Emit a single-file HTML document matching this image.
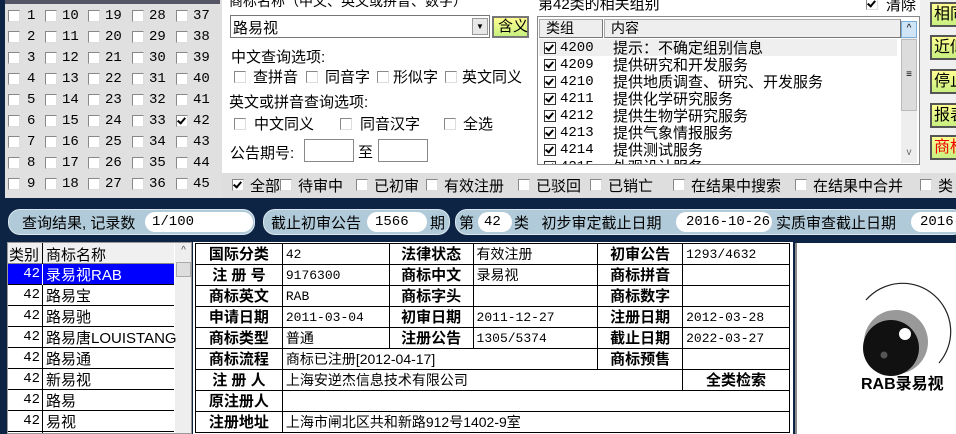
<!DOCTYPE html>
<html><head><meta charset="utf-8"><style>
*{margin:0;padding:0;box-sizing:border-box}
body{width:956px;height:434px;overflow:hidden;background:#0d2444;font-family:"Liberation Sans","Noto Sans CJK SC",sans-serif;font-size:14px;color:#000;position:relative}
.a{position:absolute;white-space:nowrap}
.cb{position:absolute;width:12px;height:12px;background:#fff;border:1px solid #888;border-right-color:#ddd;border-bottom-color:#ddd}
.cb.k::after{content:"";position:absolute;left:2px;top:0px;width:3px;height:6px;border:solid #000;border-width:0 2px 2px 0;transform:rotate(40deg)}
.num{position:absolute;font-family:"Liberation Mono","Noto Sans CJK SC",monospace;font-size:14px;line-height:14px}
.pill{position:absolute;background:#b0cad9;border-radius:12px;height:26px;top:209px;border:1px solid #dbe7ee}
.pin{position:absolute;background:#fff;border-radius:10px;height:20px;top:2px;font-family:"Liberation Mono",monospace;font-size:14px;line-height:20px}
.btn{position:absolute;left:930px;width:34px;height:25px;border:2px solid #555;background:linear-gradient(#ffff90,#c8f080);font-size:16px;line-height:21px;padding-left:2px;overflow:hidden;white-space:nowrap}
table{border-collapse:collapse;position:absolute}
td{border:1px solid #000;height:21px;padding:0 3px;font-size:14px;line-height:19px;white-space:nowrap;overflow:hidden}
td.h{font-weight:bold;text-align:center;font-size:15px;letter-spacing:0px}
td.v{font-family:"Liberation Mono","Noto Sans CJK SC",monospace;font-size:13px}
.m{font-size:15px}
</style></head><body>
<div class="a" style="left:5px;top:0;width:217px;height:198px;background:#e0e0e0"></div>
<div class="a" style="left:222px;top:0;width:734px;height:173px;background:#fff"></div>
<div class="a" style="left:222px;top:173px;width:734px;height:25px;background:#dedede"></div>
<div class="a" style="left:5px;top:0;width:215px;height:4px;background:#556"></div>

<div id="grid"></div>

<div class="a" style="left:229px;top:-9px">商标名称（中文、英文或拼音、数字）</div>
<div class="a" style="left:230px;top:15px;width:260px;height:23px;border:1px solid #777;background:#fff"><span class="a" style="left:2px;top:1px;font-size:15px">路易视</span><span class="a" style="right:1px;top:2px;width:16px;height:17px;background:#e8e8e8;border:1px solid #999;font-size:8px;text-align:center;line-height:16px">▼</span></div>
<div class="a" style="left:492px;top:16px;width:37px;height:22px;border:2px solid #777;background:linear-gradient(#ffff90,#c8f080);font-size:15px;line-height:18px;padding-left:4px">含义</div>
<div class="a" style="left:231px;top:46px;font-size:15px">中文查询选项:</div>
<div class="cb" style="left:234px;top:71px"></div><div class="a m" style="left:253px;top:66px">查拼音</div>
<div class="cb" style="left:306px;top:71px"></div><div class="a m" style="left:325px;top:66px">同音字</div>
<div class="cb" style="left:377px;top:71px"></div><div class="a m" style="left:393px;top:66px">形似字</div>
<div class="cb" style="left:445px;top:71px"></div><div class="a m" style="left:462px;top:66px">英文同义</div>
<div class="a" style="left:229px;top:91px;font-size:15px">英文或拼音查询选项:</div>
<div class="cb" style="left:234px;top:118px"></div><div class="a m" style="left:254px;top:113px">中文同义</div>
<div class="cb" style="left:340px;top:118px"></div><div class="a m" style="left:360px;top:113px">同音汉字</div>
<div class="cb" style="left:444px;top:118px"></div><div class="a m" style="left:463px;top:113px">全选</div>
<div class="a" style="left:230px;top:142px;font-size:15px">公告期号:</div>
<div class="a" style="left:304px;top:139px;width:50px;height:23px;border:1px solid #888;background:#fff"></div>
<div class="a m" style="left:358px;top:141px">至</div>
<div class="a" style="left:378px;top:139px;width:50px;height:23px;border:1px solid #888;background:#fff"></div>

<div class="a" style="left:538px;top:-7px;font-size:15px">第42类的相关组别</div>
<div class="cb k" style="left:866px;top:-2px"></div><div class="a" style="left:886px;top:-6px;font-size:15px">清除</div>
<div class="a" style="left:537px;top:16px;width:383px;height:149px;border:1px solid #888;background:#fff;overflow:hidden">
 <div class="a" style="left:1px;top:2px;width:64px;height:19px;background:#eee;border:1px solid #aaa;border-right-color:#777;border-bottom-color:#777;padding-left:6px;line-height:17px">类组</div>
 <div class="a" style="left:66px;top:2px;width:297px;height:19px;background:#eee;border:1px solid #aaa;border-right-color:#777;border-bottom-color:#777;padding-left:6px;line-height:17px">内容</div>
 <div class="a" style="left:1px;top:22px;width:358px;height:17px;background:#efefef"></div>
 <div class="a" style="left:363px;top:4px;width:16px;height:142px;background:#eee"></div>
 <div class="a" style="left:363px;top:4px;width:16px;height:17px;background:#cfe4f5;border:1px solid #7aaed8;font-size:10px;text-align:center;line-height:14px">^</div>
 <div class="a" style="left:363px;top:22px;width:16px;height:72px;background:#dcdcdc;border:1px solid #bbb;text-align:center;line-height:70px;font-size:10px">≡</div>
 <div class="a" style="left:363px;top:130px;width:16px;height:14px;text-align:center;font-size:10px;color:#666">v</div>
 <div id="grp"></div>
</div>

<div class="a" style="left:920px;top:0;width:36px;height:173px;background:#f0f0f0"></div>
<div class="btn" style="top:2px">相同</div>
<div class="btn" style="top:35px">近似</div>
<div class="btn" style="top:69px">停止</div>
<div class="btn" style="top:103px">报表</div>
<div class="btn" style="top:135px;color:#e00">商标</div>

<div id="strip"></div>

<div class="pill" style="left:8px;width:247px"><span class="a" style="left:13px;top:2px;font-size:15px">查询结果, 记录数</span><div class="pin" style="left:136px;width:108px;padding-left:7px">1/100</div></div>
<div class="pill" style="left:263px;width:187px"><span class="a" style="left:7px;top:2px;font-size:15px">截止初审公告</span><div class="pin" style="left:103px;width:60px;padding-left:8px">1566</div><span class="a" style="left:166px;top:2px;font-size:15px">期</span></div>
<div class="pill" style="left:455px;width:510px"><span class="a" style="left:3px;top:2px;font-size:15px">第</span><div class="pin" style="left:22px;width:34px;padding-left:6px">42</div><span class="a" style="left:58px;top:2px;font-size:15px">类&nbsp;&nbsp;&nbsp;初步审定截止日期</span><div class="pin" style="left:220px;width:96px;padding-left:10px">2016-10-26</div><span class="a" style="left:320px;top:2px;font-size:15px">实质审查截止日期</span><div class="pin" style="left:455px;width:80px;padding-left:9px">2016-</div></div>

<div class="a" style="left:7px;top:242px;width:185px;height:192px;background:#fff;border:1px solid #999;overflow:hidden">
 <div class="a" style="left:0;top:0;width:166px;height:21px;background:#f0f0f0;border-bottom:1px solid #888"></div>
 <div class="a" style="left:1px;top:1px;font-size:15px">类别</div><div class="a" style="left:34px;top:0;width:1px;height:192px;background:#000"></div>
 <div class="a" style="left:38px;top:1px;font-size:15px">商标名称</div>
 <div class="a" style="left:167px;top:0;width:17px;height:192px;background:#eee"></div>
 <div class="a" style="left:167px;top:2px;width:17px;height:14px;font-size:10px;text-align:center;color:#555">^</div>
 <div class="a" style="left:168px;top:19px;width:15px;height:15px;background:#ddd;border:1px solid #aaa"></div>
 <div id="lst"></div>
</div>

<div class="a" style="left:193px;top:242px;width:600px;height:192px;background:#fff"></div>
<table style="left:195px;top:243px;width:595px">
<colgroup><col style="width:87px"><col style="width:107px"><col style="width:84px"><col style="width:125px"><col style="width:85px"><col style="width:107px"></colgroup>
<tr><td class="h">国际分类</td><td class="v">42</td><td class="h">法律状态</td><td>有效注册</td><td class="h">初审公告</td><td class="v">1293/4632</td></tr>
<tr><td class="h">注 册 号</td><td class="v">9176300</td><td class="h">商标中文</td><td>录易视</td><td class="h">商标拼音</td><td></td></tr>
<tr><td class="h">商标英文</td><td class="v">RAB</td><td class="h">商标字头</td><td></td><td class="h">商标数字</td><td></td></tr>
<tr><td class="h">申请日期</td><td class="v">2011-03-04</td><td class="h">初审日期</td><td class="v">2011-12-27</td><td class="h">注册日期</td><td class="v">2012-03-28</td></tr>
<tr><td class="h">商标类型</td><td>普通</td><td class="h">注册公告</td><td class="v">1305/5374</td><td class="h">截止日期</td><td class="v">2022-03-27</td></tr>
<tr><td class="h">商标流程</td><td colspan="3">商标已注册[2012-04-17]</td><td class="h">商标预售</td><td></td></tr>
<tr><td class="h">注 册 人</td><td colspan="4" style="border-right:none">上海安逆杰信息技术有限公司</td><td class="h" style="border-left:1px solid #000">全类检索</td></tr>
<tr><td class="h">原注册人</td><td colspan="5"></td></tr>
<tr><td class="h">注册地址</td><td colspan="5">上海市闸北区共和新路912号1402-9室</td></tr>
</table>

<div class="a" style="left:795px;top:243px;width:161px;height:191px;background:#fff;border-left:2px solid #888"></div>
<svg class="a" style="left:795px;top:243px" width="161" height="191">
<path d="M71 57 A45 45 0 0 1 144 120" fill="none" stroke="#222" stroke-width="1.2"/>
<circle cx="101" cy="99" r="32" fill="#999"/>
<circle cx="96" cy="105" r="28" fill="#111"/>
<circle cx="110" cy="91" r="6" fill="#fff"/>
<circle cx="89" cy="112" r="3.5" fill="#555"/>
<text x="66" y="146" font-family="Liberation Sans,Noto Sans CJK SC,sans-serif" font-weight="bold" font-size="16" fill="#000">RAB录易视</text>
</svg>

<script>
var g='';var cx=[8,45,88,132,176];
for(var r=0;r<9;r++){var y=10+r*21;for(var c=0;c<5;c++){var n=r+1+c*9;g+='<div class="cb'+(n==42?' k':'')+'" style="left:'+cx[c]+'px;top:'+y+'px"></div><div class="num" style="left:'+(cx[c]+(n<10?19:17))+'px;top:'+(y-1)+'px">'+n+'</div>';}}
document.getElementById('grid').innerHTML=g;
var gr=[['4200','提示：不确定组别信息'],['4209','提供研究和开发服务'],['4210','提供地质调查、研究、开发服务'],['4211','提供化学研究服务'],['4212','提供生物学研究服务'],['4213','提供气象情报服务'],['4214','提供测试服务'],['4215','外观设计服务']];
var s='';for(var i=0;i<gr.length;i++){var y=23+i*17;s+='<div class="cb k" style="left:6px;top:'+(y+2)+'px;border-color:#333"></div><div class="num" style="left:22px;top:'+(y+1)+'px">'+gr[i][0]+'</div><div class="a m" style="left:75px;top:'+(y-3)+'px">'+gr[i][1]+'</div>';}
document.getElementById('grp').innerHTML=s;
var st=[[232,'全部',1],[280,'待审中'],[356,'已初审'],[426,'有效注册'],[518,'已驳回'],[590,'已销亡'],[673,'在结果中搜索'],[795,'在结果中合并'],[920,'类']];
s='';for(i=0;i<st.length;i++){s+='<div class="cb'+(st[i][2]?' k':'')+'" style="left:'+st[i][0]+'px;top:179px"></div><div class="a" style="left:'+(st[i][0]+18)+'px;top:175px;font-size:15px">'+st[i][1]+'</div>';}
document.getElementById('strip').innerHTML=s;
var ls=['录易视RAB','路易宝','路易驰','路易唐LOUISTANG','路易通','新易视','路易','易视','路易视'];
s='';for(i=0;i<ls.length;i++){var y=21+i*21;s+='<div class="a" style="left:0;top:'+y+'px;width:166px;height:21px;border-bottom:1px solid #000;'+(i==0?'background:#0000ff;color:#fff;':'')+'"><span class="a" style="left:0;width:32px;text-align:right;top:2px;font-family:Liberation Mono,monospace;font-size:14px">42</span><span class="a" style="left:34px;top:0;width:1px;height:21px;background:'+(i==0?'#fff':'#000')+'"></span><span class="a" style="left:38px;top:0;font-size:15px">'+ls[i]+'</span></div>';}
document.getElementById('lst').innerHTML=s;
</script>
</body></html>
